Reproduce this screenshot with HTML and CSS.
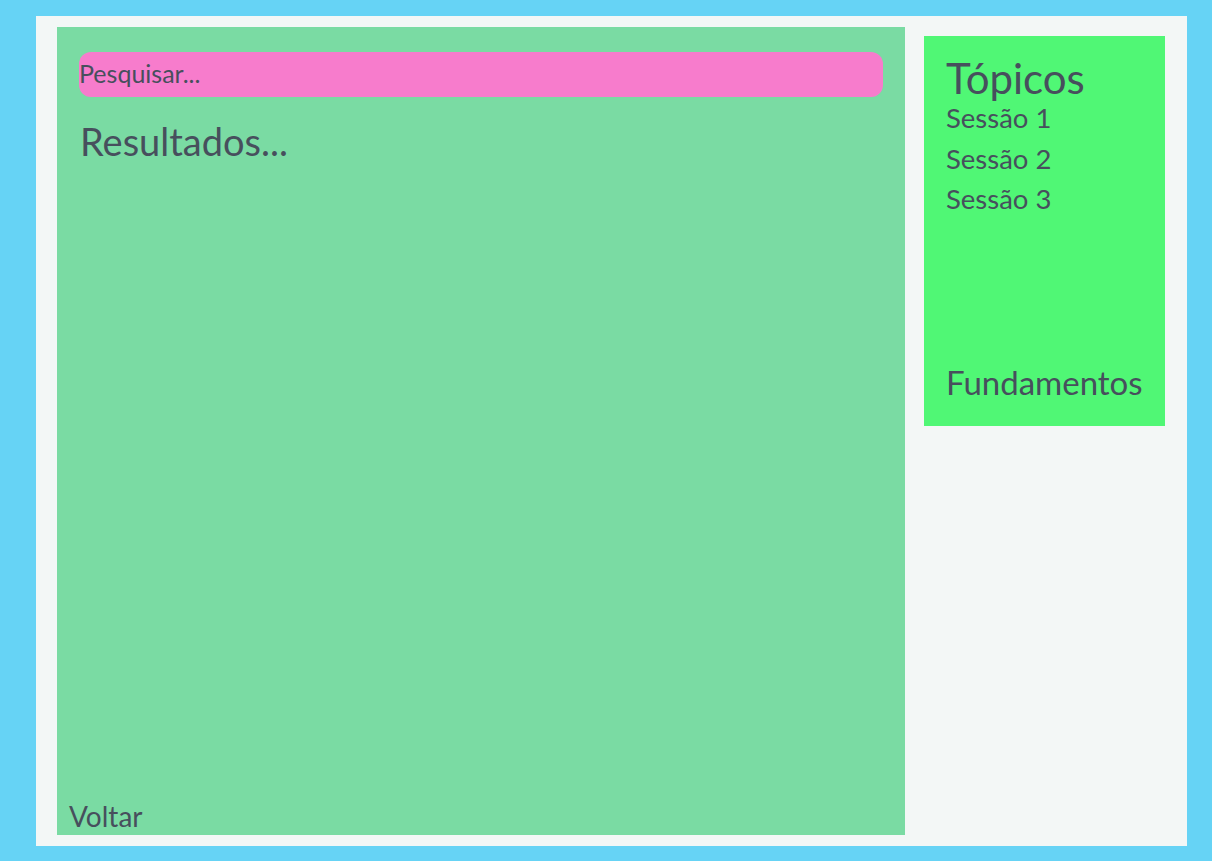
FILE: index.html
```html
<!DOCTYPE html>
<html lang="pt">
<head>
<meta charset="utf-8">
<title>Busca</title>
<link rel="stylesheet" href="styles.css">
</head>
<body>
<div class="frame">
  <main class="main">
    <div class="search">Pesquisar...</div>
    <h2 class="results">Resultados...</h2>
    <a class="back">Voltar</a>
  </main>
  <aside class="side">
    <div class="topics">
      <h1 class="side-title">Tópicos</h1>
      <ul class="sessions">
        <li>Sessão 1</li>
        <li>Sessão 2</li>
        <li>Sessão 3</li>
      </ul>
    </div>
    <div class="fund">Fundamentos</div>
  </aside>
</div>
</body>
</html>
```
FILE: styles.css
```css
html, body {
  margin: 0;
  padding: 0;
  height: 100%;
}
body {
  background: #66d3f5;
  padding: 16px 25px 15px 36px;
  box-sizing: border-box;
  font-family: Lato, "Open Sans", sans-serif;
  color: #474f5d;
}
.frame {
  background: #f3f7f6;
  height: 830px;
  display: flex;
  align-items: flex-start;
  padding: 11px 22px 11px 21px;
  box-sizing: border-box;
  gap: 19px;
}
.main {
  background: #7adba3;
  width: 848px;
  height: 808px;
  display: flex;
  flex-direction: column;
  padding: 25px 22px 0 22px;
  box-sizing: border-box;
}
.search {
  background: #f77ccc;
  height: 45px;
  border-radius: 12px;
  font-size: 25px;
  line-height: 42px;
  box-sizing: border-box;
}
.results {
  margin: 21px 0 0 1px;
  font-weight: normal;
  font-size: 38px;
  line-height: 46px;
}
.back {
  margin-top: auto;
  margin-bottom: 3px;
  margin-left: -10px;
  font-size: 28px;
  line-height: 32px;
}
.side {
  background: #50f775;
  width: 241px;
  height: 390px;
  margin-top: 9px;
  display: flex;
  flex-direction: column;
  justify-content: space-between;
  padding: 22px 22px 24px 22px;
  box-sizing: border-box;
}
.side-title {
  margin: 0;
  font-weight: normal;
  font-size: 42px;
  line-height: 40px;
}
.sessions {
  list-style: none;
  margin: 0;
  padding: 0;
  font-size: 27.5px;
  line-height: 40.5px;
}
.fund {
  font-size: 33px;
  line-height: 40px;
}
```
